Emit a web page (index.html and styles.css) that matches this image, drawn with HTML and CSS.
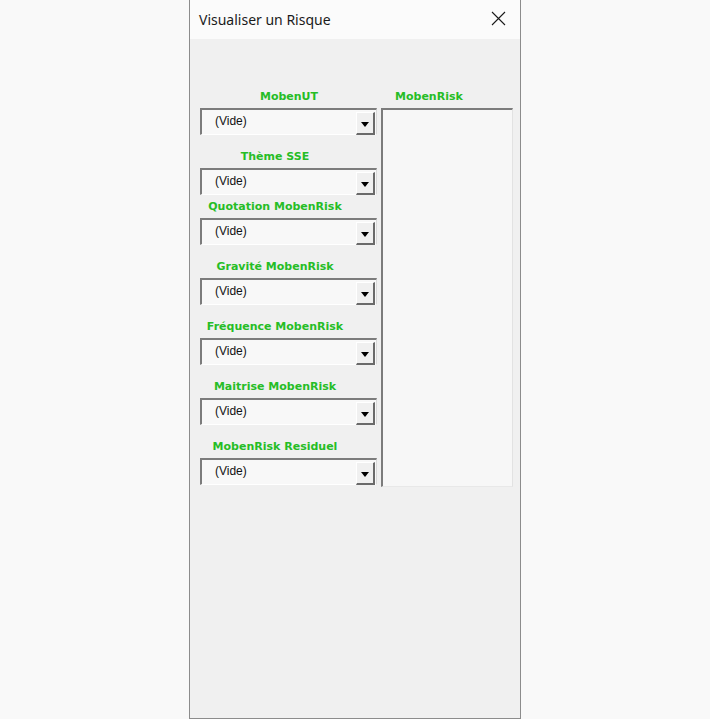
FILE: index.html
```html
<!DOCTYPE html>
<html lang="fr">
<head>
<meta charset="utf-8">
<title>Visualiser un Risque</title>
<link rel="stylesheet" href="styles.css">
</head>
<body>
<div class="window">
  <div class="titlebar">
    <span class="title">Visualiser un Risque</span>
    <svg class="close" width="15" height="15" viewBox="0 0 15 15"><path d="M1 1 L14 14 M14 1 L1 14" stroke="#1a1a1a" stroke-width="1.1" fill="none"/></svg>
  </div>
  <div class="client">
    <div class="form">
      <div class="left">
        <div class="field">
          <div class="label shift">MobenUT</div>
          <div class="combo"><span class="value">(Vide)</span><span class="btn"><i class="arrow"></i></span></div>
        </div>
        <div class="field">
          <div class="label">Thème SSE</div>
          <div class="combo"><span class="value">(Vide)</span><span class="btn"><i class="arrow"></i></span></div>
        </div>
        <div class="field close-gap">
          <div class="label">Quotation MobenRisk</div>
          <div class="combo"><span class="value">(Vide)</span><span class="btn"><i class="arrow"></i></span></div>
        </div>
        <div class="field">
          <div class="label">Gravité MobenRisk</div>
          <div class="combo"><span class="value">(Vide)</span><span class="btn"><i class="arrow"></i></span></div>
        </div>
        <div class="field">
          <div class="label">Fréquence MobenRisk</div>
          <div class="combo"><span class="value">(Vide)</span><span class="btn"><i class="arrow"></i></span></div>
        </div>
        <div class="field">
          <div class="label">Maitrise MobenRisk</div>
          <div class="combo"><span class="value">(Vide)</span><span class="btn"><i class="arrow"></i></span></div>
        </div>
        <div class="field">
          <div class="label">MobenRisk Residuel</div>
          <div class="combo"><span class="value">(Vide)</span><span class="btn"><i class="arrow"></i></span></div>
        </div>
      </div>
      <div class="right">
        <div class="label list-label">MobenRisk</div>
        <div class="listbox"></div>
      </div>
    </div>
  </div>
</div>
</body>
</html>
```
FILE: styles.css
```css
html, body {
  margin: 0;
  padding: 0;
  height: 100%;
}
body {
  background: #f9f9f9;
  display: flex;
  justify-content: center;
  overflow: hidden;
}
.window {
  width: 330px;
  height: 718px;
  border: 1px solid #8c8c8c;
  border-top: none;
  background: #f0f0f0;
  display: flex;
  flex-direction: column;
}
.titlebar {
  height: 39px;
  background: #fbfbfb;
  display: flex;
  align-items: center;
  justify-content: space-between;
  padding: 0 14px 0 9px;
  box-sizing: border-box;
}
.title {
  font-family: "Noto Sans", "Open Sans", sans-serif;
  font-size: 14px;
  color: #1a1a1a;
  margin-top: -1px;
}
.close {
  margin-top: -2px;
}
.client {
  flex: 1;
  padding: 50px 0 0 10px;
}
.form {
  display: flex;
  gap: 4px;
}
.left {
  width: 177px;
  display: flex;
  flex-direction: column;
}
.field + .field {
  margin-top: 14px;
}
.field.close-gap {
  margin-top: 4px;
}
.label {
  font-family: "DejaVu Sans", Verdana, sans-serif;
  font-weight: bold;
  font-size: 11px;
  line-height: 15px;
  height: 15px;
  color: #26bd26;
  width: 150px;
  text-align: center;
  margin-bottom: 4px;
  white-space: nowrap;
}
.label.shift {
  padding-left: 14px;
}
.combo {
  height: 27px;
  box-sizing: border-box;
  border-top: 2px solid #7c7c7c;
  border-left: 2px solid #7c7c7c;
  border-right: 1px solid #d8d8d8;
  border-bottom: 1px solid #ffffff;
  background: #f8f8f8;
  display: flex;
  align-items: center;
  justify-content: space-between;
  padding: 0 1px 0 0;
}
.value {
  font-family: "Liberation Sans", Arial, sans-serif;
  font-size: 12px;
  color: #111;
  padding-left: 13px;
  margin-top: -2px;
}
.btn {
  width: 19px;
  height: 23px;
  box-sizing: border-box;
  border-top: 1px solid #ffffff;
  border-left: 1px solid #ffffff;
  border-right: 2px solid #6a6a6a;
  border-bottom: 2px solid #6a6a6a;
  background: #f0f0f0;
  display: flex;
  align-items: center;
  justify-content: center;
  align-self: flex-end;
  margin-bottom: -1px;
}
.arrow {
  width: 0;
  height: 0;
  border-left: 4px solid transparent;
  border-right: 4px solid transparent;
  border-top: 5px solid #000;
  margin-top: 2px;
}
.right {
  width: 132px;
  display: flex;
  flex-direction: column;
}
.list-label {
  text-align: left;
  padding-left: 14px;
  width: auto;
}
.listbox {
  height: 379px;
  box-sizing: border-box;
  border-top: 2px solid #7c7c7c;
  border-left: 2px solid #7c7c7c;
  border-right: 1px solid #e2e2e2;
  border-bottom: 1px solid #e8e8e8;
  background: #f7f7f7;
}
```
